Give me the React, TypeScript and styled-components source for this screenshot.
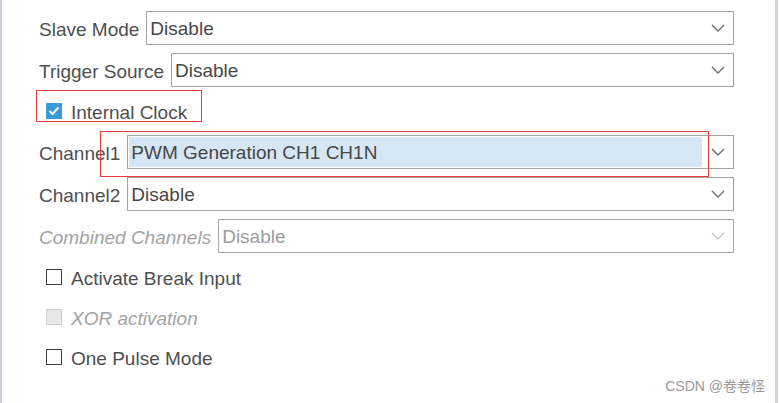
import { createGlobalStyle, styled } from 'styled-components';

const GlobalStyle = createGlobalStyle`
  html, body {
    margin: 0;
    padding: 0;
    background: #ffffff;
  }
  body {
    font-family: 'Liberation Sans', Arial, sans-serif;
  }
`;

type Field = {
  label: string;
  value: string;
  disabled?: boolean;
  selected?: boolean;
};

type Check = {
  label: string;
  checked?: boolean;
  disabled?: boolean;
};

const Chevron = ({ disabled }: { disabled?: boolean }) => (
  <svg width='14' height='8' viewBox='0 0 14 8'>
    <path
      d='M1 1 L7 7 L13 1'
      fill='none'
      stroke={disabled ? '#c4c4c4' : '#6e6e6e'}
      strokeWidth='1.4'
    />
  </svg>
);

function SelectRow({ label, value, disabled, selected }: Field) {
  return (
    <St.Row $h={42}>
      <St.Label $disabled={disabled}>{label}</St.Label>
      <St.Select $disabled={disabled}>
        <St.Value $disabled={disabled} $selected={selected}>
          {value}
        </St.Value>
        <St.Arrow>
          <Chevron disabled={disabled} />
        </St.Arrow>
      </St.Select>
    </St.Row>
  );
}

function CheckRow({ label, checked, disabled }: Check) {
  return (
    <St.Row $h={40}>
      <St.Box $checked={checked} $disabled={disabled}>
        {checked && (
          <svg width='12' height='10' viewBox='0 0 12 10'>
            <path d='M1.5 5 L4.5 8 L10.5 1.5' fill='none' stroke='#ffffff' strokeWidth='2' />
          </svg>
        )}
      </St.Box>
      <St.CheckText $disabled={disabled}>{label}</St.CheckText>
    </St.Row>
  );
}

export default function App() {
  return (
    <>
      <GlobalStyle />
      <St.Panel>
        <SelectRow label='Slave Mode' value='Disable' />
        <SelectRow label='Trigger Source' value='Disable' />
        <CheckRow label='Internal Clock' checked />
        <SelectRow label='Channel1' value='PWM Generation CH1 CH1N' selected />
        <SelectRow label='Channel2' value='Disable' />
        <SelectRow label='Combined Channels' value='Disable' disabled />
        <CheckRow label='Activate Break Input' />
        <CheckRow label='XOR activation' disabled />
        <CheckRow label='One Pulse Mode' />

        <St.Mark $x={36} $y={90} $w={166} $h={32} />
        <St.Mark $x={100} $y={131} $w={609} $h={46} />
        <St.Watermark>CSDN @卷卷怪</St.Watermark>
      </St.Panel>
    </>
  );
}

const St = {
  Panel: styled.div`
    position: relative;
    box-sizing: border-box;
    width: 778px;
    height: 403px;
    padding: 7px 41px 0 37px;
    display: flex;
    flex-direction: column;
    border-left: 2px solid #c9d1d9;
    border-right: 3px solid #cdd5dd;
    background: #ffffff;
  `,

  Row: styled.div<{ $h: number }>`
    height: ${({ $h }) => $h}px;
    display: flex;
    align-items: center;
  `,

  Label: styled.span<{ $disabled?: boolean }>`
    font-size: 19px;
    line-height: 1;
    padding-top: 2px;
    white-space: nowrap;
    margin-right: 7px;
    color: ${({ $disabled }) => ($disabled ? '#a3a3a3' : '#4f4f4f')};
    font-style: ${({ $disabled }) => ($disabled ? 'italic' : 'normal')};
  `,

  Select: styled.div<{ $disabled?: boolean }>`
    flex: 1;
    height: 34px;
    box-sizing: border-box;
    display: flex;
    align-items: stretch;
    border: 1px solid ${({ $disabled }) => ($disabled ? '#a8a8a8' : '#a3a3a3')};
    background: #ffffff;
  `,

  Value: styled.div<{ $disabled?: boolean; $selected?: boolean }>`
    flex: 1;
    display: flex;
    align-items: center;
    padding: 2px 0 0 2px;
    margin: 1px 0 1px 1px;
    font-size: 19px;
    white-space: nowrap;
    color: ${({ $disabled }) => ($disabled ? '#9c9c9c' : '#474747')};
    background: ${({ $selected }) => ($selected ? '#d7e6f4' : 'transparent')};
  `,

  Arrow: styled.div`
    width: 31px;
    display: flex;
    align-items: center;
    justify-content: center;
  `,

  Box: styled.div<{ $checked?: boolean; $disabled?: boolean }>`
    width: 16px;
    height: 16px;
    box-sizing: border-box;
    margin-left: 7px;
    margin-right: 9px;
    display: flex;
    align-items: center;
    justify-content: center;
    border: ${({ $checked, $disabled }) =>
      $checked ? 'none' : $disabled ? '1px solid #d0d0d0' : '1.5px solid #3d3d3d'};
    background: ${({ $checked, $disabled }) =>
      $checked ? '#3a9ad9' : $disabled ? '#e8e8e8' : '#ffffff'};
  `,

  CheckText: styled.span<{ $disabled?: boolean }>`
    font-size: 19px;
    line-height: 1;
    padding-top: 2px;
    white-space: nowrap;
    color: ${({ $disabled }) => ($disabled ? '#a3a3a3' : '#4f4f4f')};
    font-style: ${({ $disabled }) => ($disabled ? 'italic' : 'normal')};
  `,

  Mark: styled.div<{ $x: number; $y: number; $w: number; $h: number }>`
    position: absolute;
    left: ${({ $x }) => $x - 2}px;
    top: ${({ $y }) => $y}px;
    width: ${({ $w }) => $w}px;
    height: ${({ $h }) => $h}px;
    box-sizing: border-box;
    border: 1px solid #e83a3a;
    pointer-events: none;
  `,

  Watermark: styled.div`
    position: absolute;
    right: 10px;
    bottom: 8px;
    font-family: 'Liberation Sans', 'Noto Sans CJK SC', sans-serif;
    font-size: 14px;
    color: #9a9a9a;
  `,
};
